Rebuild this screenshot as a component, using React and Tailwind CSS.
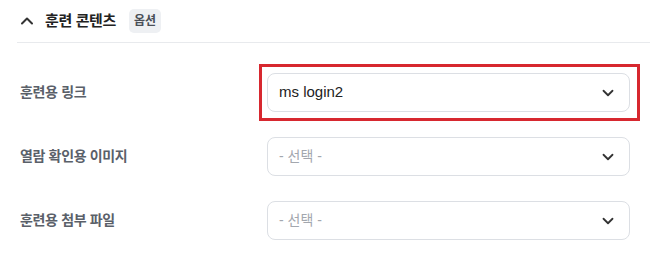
import React from 'react'
import { ChevronUp, ChevronDown } from 'lucide-react'

const fields = [
  { label: '훈련용 링크', value: 'ms login2', highlight: true },
  { label: '열람 확인용 이미지', value: null },
  { label: '훈련용 첨부 파일', value: null }
]

function SelectBox({ value, highlight }) {
  return (
    <div className="relative w-[363px]">
      {highlight && (
        <div className="pointer-events-none absolute -left-[8px] -right-[10px] -top-[9px] -bottom-[9px] border-[3px] border-[#d7282f]" />
      )}
      <button className="flex h-[39px] w-full items-center justify-between rounded-[8px] border border-[#dcdfe4] bg-white pl-[11px] pr-[12px] text-left">
        {value ? (
          <span className="text-[15px] text-[#222]">{value}</span>
        ) : (
          <span className="text-[14px] text-[#a3a7ae]">- 선택 -</span>
        )}
        <ChevronDown size={18} strokeWidth={2.4} className="text-[#333]" />
      </button>
    </div>
  )
}

export default function App() {
  return (
    <div
      className="h-[258px] w-[650px] overflow-hidden bg-white"
      style={{ fontFamily: '"Liberation Sans", "Noto Sans CJK KR", sans-serif' }}
    >
      <div className="ml-[17px] flex h-[43px] items-center border-b border-[#e8eaed]">
        <ChevronUp size={20} strokeWidth={2.4} className="text-[#333]" />
        <h2 className="ml-[8px] text-[15px] font-bold tracking-tight text-[#222]">훈련 콘텐츠</h2>
        <span className="ml-[13px] flex h-[24px] items-center rounded-[5px] bg-[#eef0f3] px-[5px] text-[12px] font-semibold text-[#4a4f57]">
          옵션
        </span>
      </div>

      <div className="flex flex-col gap-[25px] pt-[30px]">
        {fields.map(f => (
          <div key={f.label} className="flex items-center">
            <label className="w-[267px] pl-[20px] text-[14px] font-semibold tracking-tight text-[#5a6069]">
              {f.label}
            </label>
            <SelectBox value={f.value} highlight={f.highlight} />
          </div>
        ))}
      </div>
    </div>
  )
}
